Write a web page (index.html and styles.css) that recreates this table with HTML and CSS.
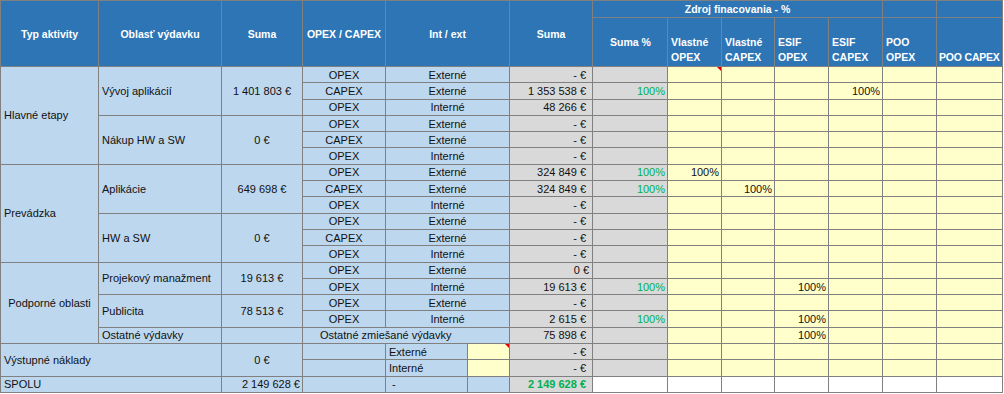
FILE: index.html
```html
<!DOCTYPE html>
<html lang="sk">
<head>
    <meta charset="UTF-8">
    <title>Zdroj financovania</title>
    <link rel="stylesheet" href="styles.css">
</head>
<body>
    <table class="sheet">
        <colgroup>
            <col style="width: 98px">
            <col style="width: 123px">
            <col style="width: 81px">
            <col style="width: 83px">
            <col style="width: 82px">
            <col style="width: 42px">
            <col style="width: 83px">
            <col style="width: 75px">
            <col style="width: 54px">
            <col style="width: 53px">
            <col style="width: 54px">
            <col style="width: 54px">
            <col style="width: 54px">
            <col style="width: 66px">
        </colgroup>
        <thead>
            <tr class="head-top">
                <th rowspan="2">Typ aktivity</th>
                <th rowspan="2">Oblasť výdavku</th>
                <th rowspan="2">Suma</th>
                <th rowspan="2">OPEX / CAPEX</th>
                <th rowspan="2" colspan="2">Int / ext</th>
                <th rowspan="2">Suma</th>
                <th colspan="5">Zdroj finacovania - %</th>
                <th></th>
                <th></th>
            </tr>
            <tr class="head-sub">
                <th class="mid">Suma %</th>
                <th>Vlastné<br>OPEX</th>
                <th>Vlastné<br>CAPEX</th>
                <th>ESIF<br>OPEX</th>
                <th>ESIF<br>CAPEX</th>
                <th>POO<br>OPEX</th>
                <th class="tight">POO CAPEX</th>
            </tr>
        </thead>
        <tbody>
            <tr>
                <td rowspan="6" class="blue left">Hlavné etapy</td>
                <td rowspan="3" class="blue left">Vývoj aplikácií</td>
                <td rowspan="3" class="blue center">1 401 803 €</td>
                <td class="blue center">OPEX</td>
                <td colspan="2" class="blue center">Externé</td>
                <td class="grey num">- €</td>
                <td class="grey pct"></td>
                <td class="yellow flag"></td><td class="yellow"></td><td class="yellow"></td><td class="yellow"></td><td class="yellow"></td><td class="yellow"></td>
            </tr>
            <tr>
                <td class="blue center">CAPEX</td>
                <td colspan="2" class="blue center">Externé</td>
                <td class="grey num">1 353 538 €</td>
                <td class="grey pct">100%</td>
                <td class="yellow"></td><td class="yellow"></td><td class="yellow"></td><td class="yellow share">100%</td><td class="yellow"></td><td class="yellow"></td>
            </tr>
            <tr>
                <td class="blue center">OPEX</td>
                <td colspan="2" class="blue center">Interné</td>
                <td class="grey num">48 266 €</td>
                <td class="grey pct"></td>
                <td class="yellow"></td><td class="yellow"></td><td class="yellow"></td><td class="yellow"></td><td class="yellow"></td><td class="yellow"></td>
            </tr>
            <tr>
                <td rowspan="3" class="blue left">Nákup HW a SW</td>
                <td rowspan="3" class="blue center">0 €</td>
                <td class="blue center">OPEX</td>
                <td colspan="2" class="blue center">Externé</td>
                <td class="grey num">- €</td>
                <td class="grey pct"></td>
                <td class="yellow"></td><td class="yellow"></td><td class="yellow"></td><td class="yellow"></td><td class="yellow"></td><td class="yellow"></td>
            </tr>
            <tr>
                <td class="blue center">CAPEX</td>
                <td colspan="2" class="blue center">Externé</td>
                <td class="grey num">- €</td>
                <td class="grey pct"></td>
                <td class="yellow"></td><td class="yellow"></td><td class="yellow"></td><td class="yellow"></td><td class="yellow"></td><td class="yellow"></td>
            </tr>
            <tr>
                <td class="blue center">OPEX</td>
                <td colspan="2" class="blue center">Interné</td>
                <td class="grey num">- €</td>
                <td class="grey pct"></td>
                <td class="yellow"></td><td class="yellow"></td><td class="yellow"></td><td class="yellow"></td><td class="yellow"></td><td class="yellow"></td>
            </tr>
            <tr>
                <td rowspan="6" class="blue left">Prevádzka</td>
                <td rowspan="3" class="blue left">Aplikácie</td>
                <td rowspan="3" class="blue center">649 698 €</td>
                <td class="blue center">OPEX</td>
                <td colspan="2" class="blue center">Externé</td>
                <td class="grey num">324 849 €</td>
                <td class="grey pct">100%</td>
                <td class="yellow share">100%</td><td class="yellow"></td><td class="yellow"></td><td class="yellow"></td><td class="yellow"></td><td class="yellow"></td>
            </tr>
            <tr>
                <td class="blue center">CAPEX</td>
                <td colspan="2" class="blue center">Externé</td>
                <td class="grey num">324 849 €</td>
                <td class="grey pct">100%</td>
                <td class="yellow"></td><td class="yellow share">100%</td><td class="yellow"></td><td class="yellow"></td><td class="yellow"></td><td class="yellow"></td>
            </tr>
            <tr>
                <td class="blue center">OPEX</td>
                <td colspan="2" class="blue center">Interné</td>
                <td class="grey num">- €</td>
                <td class="grey pct"></td>
                <td class="yellow"></td><td class="yellow"></td><td class="yellow"></td><td class="yellow"></td><td class="yellow"></td><td class="yellow"></td>
            </tr>
            <tr>
                <td rowspan="3" class="blue left">HW a SW</td>
                <td rowspan="3" class="blue center">0 €</td>
                <td class="blue center">OPEX</td>
                <td colspan="2" class="blue center">Externé</td>
                <td class="grey num">- €</td>
                <td class="grey pct"></td>
                <td class="yellow"></td><td class="yellow"></td><td class="yellow"></td><td class="yellow"></td><td class="yellow"></td><td class="yellow"></td>
            </tr>
            <tr>
                <td class="blue center">CAPEX</td>
                <td colspan="2" class="blue center">Externé</td>
                <td class="grey num">- €</td>
                <td class="grey pct"></td>
                <td class="yellow"></td><td class="yellow"></td><td class="yellow"></td><td class="yellow"></td><td class="yellow"></td><td class="yellow"></td>
            </tr>
            <tr>
                <td class="blue center">OPEX</td>
                <td colspan="2" class="blue center">Interné</td>
                <td class="grey num">- €</td>
                <td class="grey pct"></td>
                <td class="yellow"></td><td class="yellow"></td><td class="yellow"></td><td class="yellow"></td><td class="yellow"></td><td class="yellow"></td>
            </tr>
            <tr>
                <td rowspan="5" class="blue center">Podporné oblasti</td>
                <td rowspan="2" class="blue left">Projekový manažment</td>
                <td rowspan="2" class="blue center">19 613 €</td>
                <td class="blue center">OPEX</td>
                <td colspan="2" class="blue center">Externé</td>
                <td class="grey num plain">0 €</td>
                <td class="grey pct"></td>
                <td class="yellow"></td><td class="yellow"></td><td class="yellow"></td><td class="yellow"></td><td class="yellow"></td><td class="yellow"></td>
            </tr>
            <tr>
                <td class="blue center">OPEX</td>
                <td colspan="2" class="blue center">Interné</td>
                <td class="grey num">19 613 €</td>
                <td class="grey pct">100%</td>
                <td class="yellow"></td><td class="yellow"></td><td class="yellow share">100%</td><td class="yellow"></td><td class="yellow"></td><td class="yellow"></td>
            </tr>
            <tr>
                <td rowspan="2" class="blue left">Publicita</td>
                <td rowspan="2" class="blue center">78 513 €</td>
                <td class="blue center">OPEX</td>
                <td colspan="2" class="blue center">Externé</td>
                <td class="grey num">- €</td>
                <td class="grey pct"></td>
                <td class="yellow"></td><td class="yellow"></td><td class="yellow"></td><td class="yellow"></td><td class="yellow"></td><td class="yellow"></td>
            </tr>
            <tr>
                <td class="blue center">OPEX</td>
                <td colspan="2" class="blue center">Interné</td>
                <td class="grey num">2 615 €</td>
                <td class="grey pct">100%</td>
                <td class="yellow"></td><td class="yellow"></td><td class="yellow share">100%</td><td class="yellow"></td><td class="yellow"></td><td class="yellow"></td>
            </tr>
            <tr>
                <td class="blue left">Ostatné výdavky</td>
                <td class="blue"></td>
                <td colspan="3" class="blue other">Ostatné zmiešané výdavky</td>
                <td class="grey num">75 898 €</td>
                <td class="grey pct"></td>
                <td class="yellow"></td><td class="yellow"></td><td class="yellow share">100%</td><td class="yellow"></td><td class="yellow"></td><td class="yellow"></td>
            </tr>
            <tr>
                <td rowspan="2" colspan="2" class="blue left">Výstupné náklady</td>
                <td rowspan="2" class="blue center">0 €</td>
                <td class="blue"></td>
                <td class="blue left">Externé</td>
                <td class="yellow flag"></td>
                <td class="grey num">- €</td>
                <td class="grey pct"></td>
                <td class="yellow"></td><td class="yellow"></td><td class="yellow"></td><td class="yellow"></td><td class="yellow"></td><td class="yellow"></td>
            </tr>
            <tr>
                <td class="blue"></td>
                <td class="blue left">Interné</td>
                <td class="yellow"></td>
                <td class="grey num">- €</td>
                <td class="grey pct"></td>
                <td class="yellow"></td><td class="yellow"></td><td class="yellow"></td><td class="yellow"></td><td class="yellow"></td><td class="yellow"></td>
            </tr>
            <tr>
                <td colspan="2" class="blue left">SPOLU</td>
                <td class="blue total-left">2 149 628 €</td>
                <td class="blue"></td>
                <td class="blue dash">-</td>
                <td class="blue"></td>
                <td class="grey num total">2 149 628 €</td>
                <td class="white"></td><td class="white"></td><td class="white"></td><td class="white"></td><td class="white"></td><td class="white"></td><td class="white"></td>
            </tr>
        </tbody>
    </table>
</body>
</html>
```

FILE: styles.css
```css
* {
    box-sizing: border-box;
}

body {
    margin: 0;
    font-family: "Liberation Sans", Arial, sans-serif;
    font-size: 11px;
    color: #111;
    background: #fff;
}

.sheet {
    border-collapse: collapse;
    table-layout: fixed;
    width: 1003px;
}

.sheet th,
.sheet td {
    border: 1px solid #808080;
    padding: 0 3px;
    white-space: nowrap;
    overflow: hidden;
    line-height: 14px;
}

/* header */

.sheet th {
    background: #2e75b6;
    color: #fff;
    font-size: 10.5px;
    font-weight: bold;
    text-align: center;
    vertical-align: middle;
}

.head-top th {
    height: 17px;
}

.sheet .head-sub th {
    height: 49px;
    text-align: left;
    vertical-align: bottom;
    padding: 0 2px 1px 3px;
    line-height: 15px;
}

.sheet .head-sub th.mid {
    text-align: center;
    vertical-align: middle;
    padding-bottom: 0;
}

.sheet .head-sub th.tight {
    padding-left: 2px;
    letter-spacing: -0.2px;
}

/* body cells */

.sheet tbody tr {
    height: 16.3px;
}

.sheet td {
    vertical-align: middle;
}

.blue {
    background: #bdd7ee;
}

.grey {
    background: #d9d9d9;
}

.yellow {
    background: #ffffcc;
}

.white {
    background: #fff;
}

.left {
    text-align: left;
}

.center {
    text-align: center;
}

.sheet .other {
    text-align: left;
    padding-left: 17px;
}

.sheet .num {
    text-align: right;
    padding-right: 6px;
}

.sheet .num.plain {
    padding-right: 3px;
}

.sheet .pct {
    text-align: right;
    padding-right: 2px;
    color: #00b050;
}

.sheet .share {
    text-align: right;
    padding-right: 2px;
}

.total {
    color: #00b050;
    font-weight: bold;
}

.sheet .total-left {
    text-align: right;
    padding-right: 2px;
}

.sheet .dash {
    padding-left: 6px;
}

/* comment marker */

.flag {
    position: relative;
}

.flag::after {
    content: "";
    position: absolute;
    top: 0;
    right: 0;
    border-top: 4px solid #e00000;
    border-left: 4px solid transparent;
}
```
